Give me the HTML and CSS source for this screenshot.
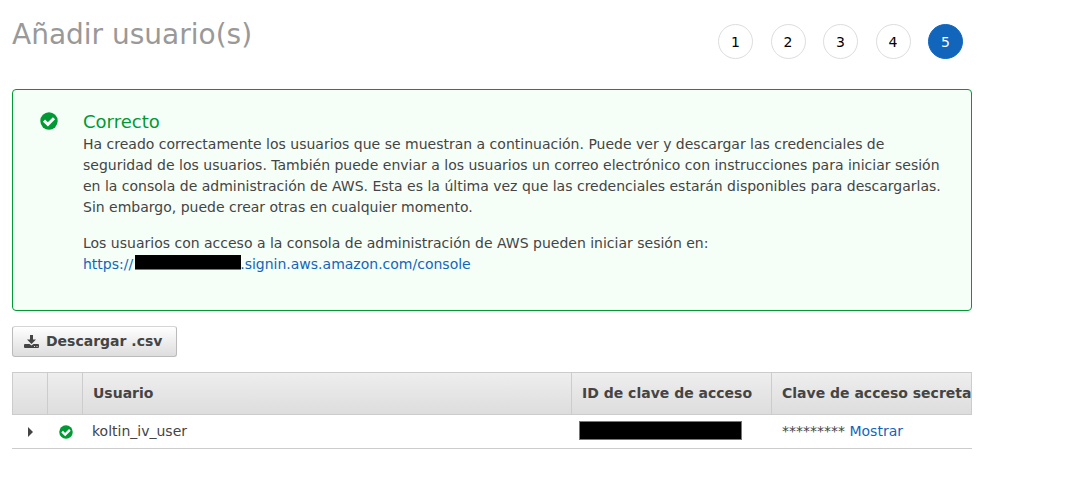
FILE: index.html
```html
<!DOCTYPE html>
<html lang="es">
<head>
<meta charset="utf-8">
<title>Añadir usuario(s)</title>
<meta name="viewport" content="width=device-width, initial-scale=1">
<link rel="stylesheet" href="styles.css">
</head>
<body>
<svg class="sprite" aria-hidden="true">
  <symbol id="ok" viewBox="0 0 18 18">
    <circle cx="9" cy="9" r="8.700" fill="#009933"/>
    <path d="M4 8.600 7.900 12.300 14 6.200" fill="none" stroke="#fff" stroke-width="3"/>
  </symbol>
</svg>
<main class="page">
  <header class="header">
    <h1 class="title">Añadir usuario(s)</h1>
    <ol class="steps">
      <li class="step">1</li>
      <li class="step">2</li>
      <li class="step">3</li>
      <li class="step">4</li>
      <li class="step step-current" aria-current="step">5</li>
    </ol>
  </header>

  <section class="alert">
    <svg class="alert-icon" aria-hidden="true"><use href="#ok"/></svg>
    <div class="alert-body">
      <h2 class="alert-title">Correcto</h2>
      <p class="alert-text">Ha creado correctamente los usuarios que se muestran a continuación. Puede ver y descargar las credenciales de seguridad de los usuarios. También puede enviar a los usuarios un correo electrónico con instrucciones para iniciar sesión en la consola de administración de AWS. Esta es la última vez que las credenciales estarán disponibles para descargarlas. Sin embargo, puede crear otras en cualquier momento.</p>
      <p class="alert-text">Los usuarios con acceso a la consola de administración de AWS pueden iniciar sesión en:<br><a class="link" href="#">https://<span class="redacted redacted-account"></span>.signin.aws.amazon.com/console</a></p>
    </div>
  </section>

  <button class="download" type="button">
    <svg class="download-icon" viewBox="0 0 15 16" aria-hidden="true">
      <path d="M6 1h3v4.500h3L7.500 10 3 5.500h3z" fill="#444"/>
      <path d="M1 10h4.500l2 1.500 2-1.500H14q1 0 1 1v2q0 1-1 1H1q-1 0-1-1v-2q0-1 1-1z" fill="#444"/>
      <path d="M10 12.500h1M12.500 12.500h1" stroke="#ddd" stroke-width="1"/>
    </svg>
    Descargar .csv
  </button>

  <div class="table-wrap">
    <table class="users">
      <colgroup>
        <col class="col-icon"><col class="col-icon"><col><col class="col-key"><col class="col-secret">
      </colgroup>
      <thead>
        <tr><th></th><th></th><th>Usuario</th><th>ID de clave de acceso</th><th>Clave de acceso secreta</th></tr>
      </thead>
      <tbody>
        <tr>
          <td class="cell-icon"><button class="expand" type="button" aria-label="Expandir"><svg class="expand-icon" viewBox="0 0 5 10" aria-hidden="true"><path d="M0 0 5 5 0 10z" fill="#444"/></svg></button></td>
          <td class="cell-icon"><svg class="row-icon" aria-hidden="true"><use href="#ok"/></svg></td>
          <td>koltin_iv_user</td>
          <td class="cell-key"><span class="redacted redacted-key"></span></td>
          <td class="cell-secret">********* <a class="link" href="#">Mostrar</a></td>
        </tr>
      </tbody>
    </table>
  </div>
</main>
</body>
</html>
```
FILE: styles.css
```css
* { box-sizing: border-box; }
body {
  margin: 0;
  background: #fff;
  color: #444;
  font: 14px/21px "DejaVu Sans", Verdana, sans-serif;
}
.sprite { position: absolute; width: 0; height: 0; }
.page { max-width: 984px; padding: 16px 12px; }
.header {
  display: flex;
  justify-content: space-between;
  align-items: flex-start;
  margin-bottom: 30px;
}
.title { margin: 0; color: #999; font-size: 28px; font-weight: 400; line-height: 38px; }
.steps {
  display: flex;
  justify-content: space-between;
  width: 245px;
  margin: 8px 9px 0 0;
  padding: 0;
  list-style: none;
}
.step {
  width: 35px;
  height: 35px;
  border: 1px solid #ddd;
  border-radius: 50%;
  color: #000;
  line-height: 34px;
  text-align: center;
}
.step-current { border-color: #1166bb; background: #1166bb; color: #fff; }
.alert {
  display: flex;
  gap: 25px;
  padding: 20px 28px 35px 27px;
  border: 1px solid #009933;
  border-radius: 4px;
  background: #f6fef8;
}
.alert-icon { flex: none; width: 18px; height: 18px; margin-top: 2px; }
.alert-title { margin: 0 0 1px; color: #009933; font-size: 18px; font-weight: 400; line-height: 23px; }
.alert-text { margin: 0 0 15px; }
.alert-text:last-child { margin-bottom: 0; }
.link { color: #1166bb; text-decoration: none; }
.redacted { display: inline-block; background: #000; }
.redacted-account { width: 106px; height: 15px; margin-left: 2px; margin-right: -1px; border-bottom: 1px solid #777; vertical-align: -1px; }
.redacted-key { display: block; width: 163px; height: 19px; border: 1px solid #777; }
.download {
  display: flex;
  align-items: center;
  gap: 7px;
  height: 31px;
  margin: 15px 0;
  padding: 0 14px 0 11px;
  border: 1px solid #bbb;
  border-top-color: #d5d5d5;
  border-radius: 3px;
  background: linear-gradient(#fff, #ddd);
  color: #444;
  font: bold 14px/21px "DejaVu Sans", Verdana, sans-serif;
}
.download-icon { width: 15px; height: 16px; }
.table-wrap { overflow: hidden; }
.users { width: 100%; border-collapse: separate; border-spacing: 0; table-layout: fixed; }
.col-icon { width: 35px; }
.col-key { width: 200px; }
.col-secret { width: 201px; }
.users th {
  height: 43px;
  padding: 0 0 0 10px;
  border: solid #ccc;
  border-width: 1px 0 1px 1px;
  background: linear-gradient(#eee, #ddd);
  overflow: hidden;
  text-align: left;
  white-space: nowrap;
}
.users th:last-child { border-right-width: 1px; }
.users td { height: 34px; padding: 0 0 0 10px; border-bottom: 1px solid #ccc; }
.users .cell-icon { padding: 0; }
.users .cell-key { padding: 0 0 2px 8px; }
.users .cell-secret { padding-left: 11px; }
.row-icon { display: block; width: 14px; height: 14px; margin-left: 12px; }
.expand { display: block; margin: 0 auto; padding: 0 0 0 2px; border: 0; background: none; }
.expand-icon { display: block; width: 5px; height: 10px; }
```
